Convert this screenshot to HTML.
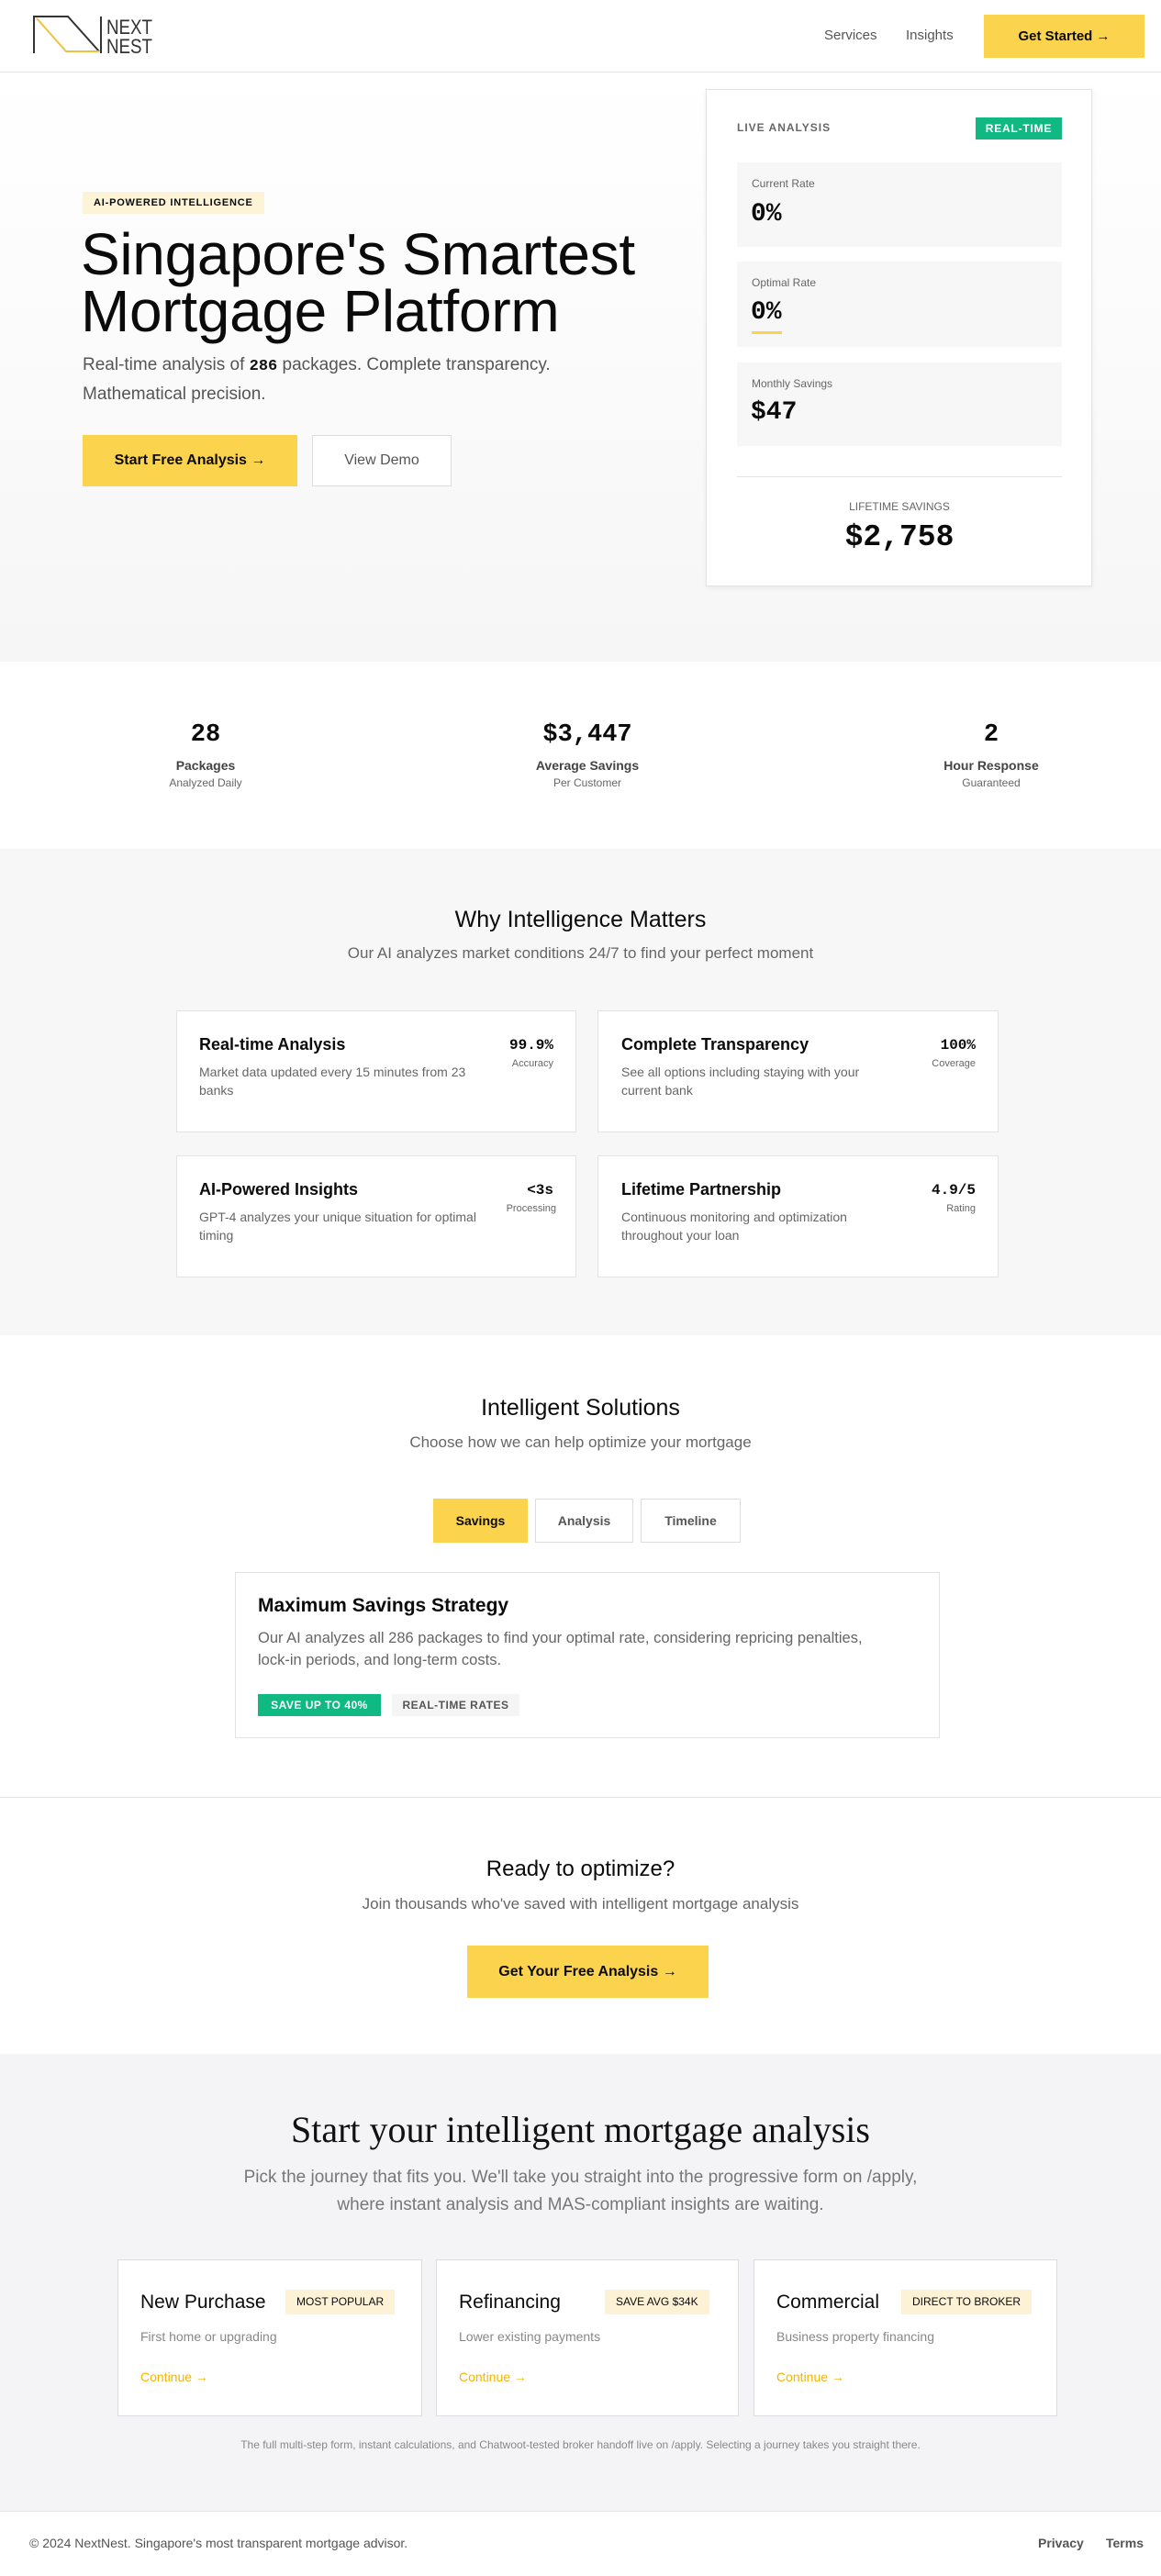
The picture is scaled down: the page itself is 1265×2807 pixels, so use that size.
<!DOCTYPE html>
<html><head><meta charset="utf-8"><style>
*{box-sizing:border-box;margin:0;padding:0}
body{width:1265px;height:2807px;font-family:"Liberation Sans",sans-serif;color:#0b0b0b;background:#fff;position:relative;overflow:hidden}
.a{position:absolute}
.mono{font-family:"Liberation Mono",monospace;font-weight:700}
.y{background:#fcd34d}
.c{text-align:center}
.g{color:#666}
</style></head><body>
<!-- nav -->
<div class="a" style="left:0;top:0;width:1265px;height:79px;border-bottom:1px solid #e5e5e5;background:#fff"></div>
<svg class="a" style="left:34px;top:14px" width="140" height="50" viewBox="0 0 140 50">
<polyline points="3,44 3,4 40,4 74,42" fill="none" stroke="#333" stroke-width="2"/>
<polyline points="6,6 38,42 74,42" fill="none" stroke="#f0c040" stroke-width="2"/>
<line x1="76" y1="4" x2="76" y2="44" stroke="#333" stroke-width="2"/>
<text x="82" y="23" font-family="Liberation Sans Narrow,Liberation Sans,sans-serif" font-size="22" fill="#333" textLength="50" lengthAdjust="spacingAndGlyphs">NEXT</text>
<text x="82" y="44" font-family="Liberation Sans Narrow,Liberation Sans,sans-serif" font-size="22" fill="#333" textLength="50" lengthAdjust="spacingAndGlyphs">NEST</text>
</svg>
<div class="a g" style="left:898px;top:30px;font-size:15px;color:#555">Services</div>
<div class="a g" style="left:987px;top:30px;font-size:15px;color:#555">Insights</div>
<div class="a y" style="left:1072px;top:16px;width:175px;height:47px;font-size:15px;font-weight:700;line-height:47px;text-align:center">Get Started →</div>
<!-- hero -->
<div class="a" style="left:0;top:80px;width:1265px;height:641px;background:linear-gradient(#fff,#f6f6f6)"></div>
<div class="a" style="left:90px;top:209px;height:24px;padding:0 12px;background:#fdf4d8;font-size:11px;font-weight:700;letter-spacing:.8px;line-height:24px">AI-POWERED INTELLIGENCE</div>
<div class="a" style="left:88px;top:246px;font-size:64px;line-height:62px;letter-spacing:-.3px">Singapore's Smartest<br>Mortgage Platform</div>
<div class="a" style="left:90px;top:383px;font-size:19px;line-height:30px;color:#555">Real-time analysis of <b class="mono" style="color:#111;font-size:17px">286</b> packages. Complete transparency.<br>Mathematical precision.</div>
<div class="a y" style="left:90px;top:474px;width:234px;height:56px;line-height:56px;text-align:center;font-size:16px;font-weight:700">Start Free Analysis →</div>
<div class="a" style="left:340px;top:474px;width:152px;height:56px;line-height:54px;text-align:center;font-size:16px;border:1px solid #ddd;color:#555;background:#fff">View Demo</div>
<div class="a" style="left:769px;top:97px;width:421px;height:542px;background:#fff;border:1px solid #e3e3e3;box-shadow:0 2px 6px rgba(0,0,0,.06)"></div>
<div class="a" style="left:803px;top:132px;font-size:12px;font-weight:700;letter-spacing:1px;color:#666">LIVE ANALYSIS</div>
<div class="a" style="left:1063px;top:128px;width:94px;height:24px;background:#10b981;color:#fff;font-size:12px;font-weight:700;line-height:24px;text-align:center;letter-spacing:.8px">REAL-TIME</div>
<div class="a" style="left:803px;top:177px;width:354px;height:92px;background:#f7f7f7"></div>
<div class="a g" style="left:819px;top:193px;font-size:12px">Current Rate</div>
<div class="a mono" style="left:818px;top:218px;font-size:28px">0%</div>
<div class="a" style="left:803px;top:285px;width:354px;height:93px;background:#f7f7f7"></div>
<div class="a g" style="left:819px;top:301px;font-size:12px">Optimal Rate</div>
<div class="a mono" style="left:818px;top:325px;font-size:28px">0%</div>
<div class="a y" style="left:819px;top:361px;width:33px;height:3px"></div>
<div class="a" style="left:803px;top:395px;width:354px;height:91px;background:#f7f7f7"></div>
<div class="a g" style="left:819px;top:411px;font-size:12px">Monthly Savings</div>
<div class="a mono" style="left:818px;top:434px;font-size:28px">$47</div>
<div class="a" style="left:803px;top:519px;width:354px;height:1px;background:#e3e3e3"></div>
<div class="a g c" style="left:803px;top:545px;width:354px;font-size:12px">LIFETIME SAVINGS</div>
<div class="a mono c" style="left:803px;top:567px;width:354px;font-size:33px">$2,758</div>
<!-- stats -->
<div class="a mono c" style="left:124px;top:786px;width:200px;font-size:27px">28</div>
<div class="a c" style="left:124px;top:826px;width:200px;font-size:14px;font-weight:700;color:#444">Packages</div>
<div class="a c g" style="left:124px;top:846px;width:200px;font-size:12px">Analyzed Daily</div>
<div class="a mono c" style="left:490px;top:786px;width:300px;font-size:27px">$3,447</div>
<div class="a c" style="left:490px;top:826px;width:300px;font-size:14px;font-weight:700;color:#444">Average Savings</div>
<div class="a c g" style="left:490px;top:846px;width:300px;font-size:12px">Per Customer</div>
<div class="a mono c" style="left:955px;top:786px;width:250px;font-size:27px">2</div>
<div class="a c" style="left:955px;top:826px;width:250px;font-size:14px;font-weight:700;color:#444">Hour Response</div>
<div class="a c g" style="left:955px;top:846px;width:250px;font-size:12px">Guaranteed</div>
<!-- why -->
<div class="a" style="left:0;top:925px;width:1265px;height:530px;background:#f7f7f7"></div>
<div class="a c" style="left:0;top:988px;width:1265px;font-size:25px">Why Intelligence Matters</div>
<div class="a c g" style="left:0;top:1029px;width:1265px;font-size:17px">Our AI analyzes market conditions 24/7 to find your perfect moment</div>
<div class="a" style="left:192px;top:1101px;width:436px;height:133px;background:#fff;border:1px solid #e3e3e3"></div>
<div class="a" style="left:651px;top:1101px;width:437px;height:133px;background:#fff;border:1px solid #e3e3e3"></div>
<div class="a" style="left:192px;top:1259px;width:436px;height:133px;background:#fff;border:1px solid #e3e3e3"></div>
<div class="a" style="left:651px;top:1259px;width:437px;height:133px;background:#fff;border:1px solid #e3e3e3"></div>
<div class="a" style="left:217px;top:1128px;font-size:18px;font-weight:700">Real-time Analysis</div>
<div class="a g" style="left:217px;top:1158px;width:320px;font-size:14px;line-height:20px">Market data updated every 15 minutes from 23 banks</div>
<div class="a mono" style="left:520px;top:1130px;width:83px;text-align:right;font-size:16px">99.9%</div>
<div class="a g" style="left:520px;top:1153px;width:83px;text-align:right;font-size:11px">Accuracy</div>
<div class="a" style="left:677px;top:1128px;font-size:18px;font-weight:700">Complete Transparency</div>
<div class="a g" style="left:677px;top:1158px;width:300px;font-size:14px;line-height:20px">See all options including staying with your current bank</div>
<div class="a mono" style="left:980px;top:1130px;width:83px;text-align:right;font-size:16px">100%</div>
<div class="a g" style="left:980px;top:1153px;width:83px;text-align:right;font-size:11px">Coverage</div>
<div class="a" style="left:217px;top:1286px;font-size:18px;font-weight:700">AI-Powered Insights</div>
<div class="a g" style="left:217px;top:1316px;width:330px;font-size:14px;line-height:20px">GPT-4 analyzes your unique situation for optimal timing</div>
<div class="a mono" style="left:520px;top:1288px;width:83px;text-align:right;font-size:16px">&lt;3s</div>
<div class="a g" style="left:520px;top:1311px;width:86px;text-align:right;font-size:11px">Processing</div>
<div class="a" style="left:677px;top:1286px;font-size:18px;font-weight:700">Lifetime Partnership</div>
<div class="a g" style="left:677px;top:1316px;width:300px;font-size:14px;line-height:20px">Continuous monitoring and optimization throughout your loan</div>
<div class="a mono" style="left:980px;top:1288px;width:83px;text-align:right;font-size:16px">4.9/5</div>
<div class="a g" style="left:980px;top:1311px;width:83px;text-align:right;font-size:11px">Rating</div>
<!-- solutions -->
<div class="a c" style="left:0;top:1520px;width:1265px;font-size:25px">Intelligent Solutions</div>
<div class="a c g" style="left:0;top:1562px;width:1265px;font-size:17px">Choose how we can help optimize your mortgage</div>
<div class="a y c" style="left:472px;top:1633px;width:103px;height:48px;line-height:48px;font-size:14px;font-weight:700">Savings</div>
<div class="a c" style="left:583px;top:1633px;width:107px;height:48px;line-height:46px;font-size:14px;font-weight:700;color:#555;border:1px solid #ddd">Analysis</div>
<div class="a c" style="left:698px;top:1633px;width:109px;height:48px;line-height:46px;font-size:14px;font-weight:700;color:#555;border:1px solid #ddd">Timeline</div>
<div class="a" style="left:256px;top:1713px;width:768px;height:181px;border:1px solid #e3e3e3"></div>
<div class="a" style="left:281px;top:1738px;font-size:21px;font-weight:700">Maximum Savings Strategy</div>
<div class="a g" style="left:281px;top:1773px;width:730px;font-size:16.5px;line-height:24px">Our AI analyzes all 286 packages to find your optimal rate, considering repricing penalties,<br>lock-in periods, and long-term costs.</div>
<div class="a" style="left:281px;top:1846px;width:134px;height:24px;background:#10b981;color:#fff;font-size:12px;font-weight:700;line-height:24px;text-align:center;letter-spacing:.5px">SAVE UP TO 40%</div>
<div class="a" style="left:427px;top:1846px;width:139px;height:24px;background:#f5f5f5;color:#555;font-size:12px;font-weight:700;line-height:24px;text-align:center;letter-spacing:.5px">REAL-TIME RATES</div>
<div class="a" style="left:0;top:1958px;width:1265px;height:1px;background:#e5e5e5"></div>
<!-- CTA -->
<div class="a c" style="left:0;top:2023px;width:1265px;font-size:24px">Ready to optimize?</div>
<div class="a c g" style="left:0;top:2065px;width:1265px;font-size:17px">Join thousands who've saved with intelligent mortgage analysis</div>
<div class="a y c" style="left:509px;top:2120px;width:263px;height:57px;line-height:57px;font-size:16px;font-weight:700">Get Your Free Analysis →</div>
<!-- journey -->
<div class="a" style="left:0;top:2238px;width:1265px;height:498px;background:#f4f4f6"></div>
<div class="a c" style="left:0;top:2297px;width:1265px;font-family:'Liberation Serif',serif;font-size:40px;color:#111">Start your intelligent mortgage analysis</div>
<div class="a c" style="left:0;top:2358px;width:1265px;font-size:19px;line-height:30px;color:#777">Pick the journey that fits you. We'll take you straight into the progressive form on /apply,<br>where instant analysis and MAS-compliant insights are waiting.</div>
<div class="a" style="left:128px;top:2462px;width:332px;height:171px;background:#fff;border:1px solid #ddd"></div>
<div class="a" style="left:475px;top:2462px;width:330px;height:171px;background:#fff;border:1px solid #ddd"></div>
<div class="a" style="left:821px;top:2462px;width:331px;height:171px;background:#fff;border:1px solid #ddd"></div>
<div class="a" style="left:153px;top:2497px;font-size:21px;font-weight:500">New Purchase</div>
<div class="a" style="left:311px;top:2495px;height:27px;padding:0 12px;background:#fdf2d6;font-size:12px;line-height:27px">MOST POPULAR</div>
<div class="a" style="left:153px;top:2538px;font-size:14px;color:#888">First home or upgrading</div>
<div class="a" style="left:153px;top:2582px;font-size:14px;color:#f5b400">Continue →</div>
<div class="a" style="left:500px;top:2497px;font-size:21px;font-weight:500">Refinancing</div>
<div class="a" style="left:659px;top:2495px;height:27px;padding:0 12px;background:#fdf2d6;font-size:12px;line-height:27px">SAVE AVG $34K</div>
<div class="a" style="left:500px;top:2538px;font-size:14px;color:#888">Lower existing payments</div>
<div class="a" style="left:500px;top:2582px;font-size:14px;color:#f5b400">Continue →</div>
<div class="a" style="left:846px;top:2497px;font-size:21px;font-weight:500">Commercial</div>
<div class="a" style="left:982px;top:2495px;height:27px;padding:0 12px;background:#fdf2d6;font-size:12px;line-height:27px">DIRECT TO BROKER</div>
<div class="a" style="left:846px;top:2538px;font-size:14px;color:#888">Business property financing</div>
<div class="a" style="left:846px;top:2582px;font-size:14px;color:#f5b400">Continue →</div>
<div class="a c" style="left:0;top:2657px;width:1265px;font-size:12px;color:#888">The full multi-step form, instant calculations, and Chatwoot-tested broker handoff live on /apply. Selecting a journey takes you straight there.</div>
<!-- footer -->
<div class="a" style="left:0;top:2736px;width:1265px;height:1px;background:#e5e5e5"></div>
<div class="a" style="left:32px;top:2763px;font-size:14px;color:#555">© 2024 NextNest. Singapore's most transparent mortgage advisor.</div>
<div class="a" style="left:1131px;top:2763px;font-size:14px;color:#555;font-weight:700">Privacy</div>
<div class="a" style="left:1205px;top:2763px;font-size:14px;color:#555;font-weight:700">Terms</div>
</body></html>
